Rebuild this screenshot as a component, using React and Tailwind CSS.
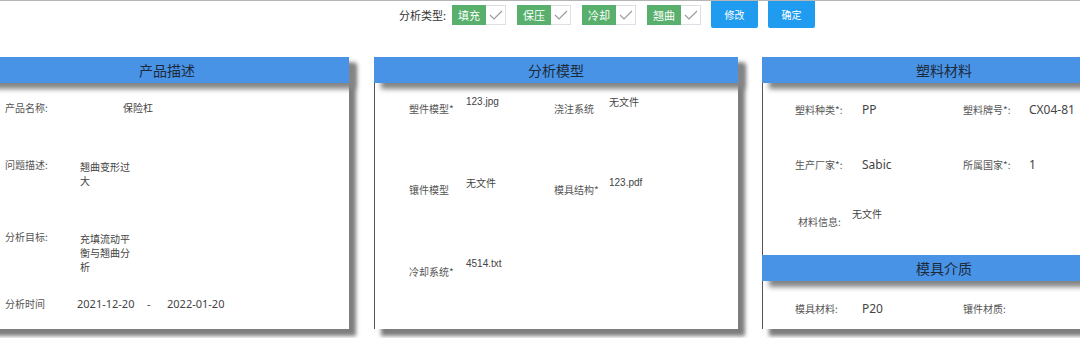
import React from "react";

const CJK = { fontFamily: '"Noto Sans CJK SC", "Noto Sans", sans-serif' };
const LAT = { fontFamily: '"Noto Sans", "Noto Sans CJK SC", sans-serif' };
const ARIAL = { fontFamily: '"Liberation Sans", "Noto Sans CJK SC", sans-serif' };

function Check() {
  return (
    <div className="w-[20px] h-[20px] bg-white border border-l-0 border-[#dcdfe6] flex items-center justify-center">
      <svg width="14" height="10" viewBox="0 0 14 10">
        <path d="M1 5 L5 9 L13 1" fill="none" stroke="#9a9a9a" strokeWidth="1.1" />
      </svg>
    </div>
  );
}

function Tag({ label, className }) {
  return (
    <div className={"flex mt-[4px] " + (className || "")}>
      <div className="w-[34px] h-[20px] bg-[#58b06c] text-white text-[11px] leading-[20px] text-center" style={CJK}>
        {label}
      </div>
      <Check />
    </div>
  );
}

function Btn({ label, className }) {
  return (
    <div
      className={"w-[47px] h-[27px] bg-[#1f9cf0] rounded-b-[2px] text-white text-[10px] leading-[27px] text-center " + (className || "")}
      style={CJK}
    >
      {label}
    </div>
  );
}

function Header({ title, className }) {
  return (
    <div
      className={"relative z-10 shrink-0 h-[26px] bg-[#4893e6] flex items-center justify-center text-[14px] text-[#1d2a3a] shadow-[7px_6px_5px_#858585] " + (className || "")}
      style={CJK}
    >
      {title}
    </div>
  );
}

function Panel({ title, className, children }) {
  return (
    <div className={"relative flex flex-col w-[364px] h-[272px] shrink-0 overflow-visible bg-white border-l border-[#555] shadow-[7px_7px_4px_#7d7d7d] " + (className || "")}>
      <Header title={title} className="-ml-px" />
      {children}
    </div>
  );
}

const L = "text-[10px] leading-[14px] text-[#555] whitespace-nowrap";
const V = "text-[10px] leading-[14px] text-[#444]";

export default function App() {
  return (
    <div className="w-[1080px] h-[338px] overflow-hidden bg-white border-t border-[#b5b5b5]" style={CJK}>
      {/* top bar */}
      <div className="h-[56px] flex items-start">
        <div className="ml-[399px] mt-[7px] text-[11px] leading-[14px] text-[#333] w-[44px] whitespace-nowrap">分析类型:</div>
        <Tag label="填充" className="ml-[9px]" />
        <Tag label="保压" className="ml-[11px]" />
        <Tag label="冷却" className="ml-[11px]" />
        <Tag label="翘曲" className="ml-[11px]" />
        <Btn label="修改" className="ml-[10px]" />
        <Btn label="确定" className="ml-[10px]" />
      </div>

      {/* panels */}
      <div className="flex items-start">
        {/* Panel 1 */}
        <Panel title="产品描述" className="ml-[-15px]">
          <div className="flex flex-col pl-[19px] pt-[18px]">
            <div className="flex h-[57px]">
              <div className={L + " w-[118px]"}>产品名称:</div>
              <div className={V}>保险杠</div>
            </div>
            <div className="flex h-[72px]">
              <div className={L + " w-[75px]"}>问题描述:</div>
              <div className={V + " w-[52px] mt-[2px]"}>翘曲变形过大</div>
            </div>
            <div className="flex h-[67px]">
              <div className={L + " w-[75px]"}>分析目标:</div>
              <div className={V + " w-[52px] mt-[2px]"}>充填流动平衡与翘曲分析</div>
            </div>
            <div className="flex">
              <div className={L + " w-[72px]"}>分析时间</div>
              <div className="text-[11px] leading-[14px] text-[#444] w-[70px]" style={LAT}>2021-12-20</div>
              <div className="text-[11px] leading-[14px] text-[#444] w-[20px]" style={LAT}>-</div>
              <div className="text-[11px] leading-[14px] text-[#444]" style={LAT}>2022-01-20</div>
            </div>
          </div>
        </Panel>

        {/* Panel 2 */}
        <Panel title="分析模型" className="ml-[25px]">
          <div className="grid grid-cols-[57px_88px_55px_1fr] auto-rows-[81px] pl-[34px] pt-[12px]">
            <div className={L + " mt-[7px]"}>塑件模型*</div>
            <div className="text-[10px] leading-[14px] text-[#444]" style={ARIAL}>123.jpg</div>
            <div className={L + " mt-[7px]"}>浇注系统</div>
            <div className={V}>无文件</div>

            <div className={L + " mt-[7px]"}>镶件模型</div>
            <div className={V}>无文件</div>
            <div className={L + " mt-[7px]"}>模具结构*</div>
            <div className="text-[10px] leading-[14px] text-[#444]" style={ARIAL}>123.pdf</div>

            <div className={L + " mt-[8px]"}>冷却系统*</div>
            <div className="text-[10px] leading-[14px] text-[#444]" style={ARIAL}>4514.txt</div>
            <div></div>
            <div></div>
          </div>
        </Panel>

        {/* Panel 3 */}
        <Panel title="塑料材料" className="ml-[24px]">
          <div className="flex flex-col pl-[32px]">
            <div className="flex items-center h-[18px] mt-[18px]">
              <div className={L + " w-[67px]"}>塑料种类*:</div>
              <div className="text-[12px] text-[#444] w-[101px]" style={LAT}>PP</div>
              <div className={L + " w-[66px]"}>塑料牌号*:</div>
              <div className="text-[12px] text-[#444]" style={LAT}>CX04-81</div>
            </div>
            <div className="flex items-center h-[18px] mt-[37px]">
              <div className={L + " w-[67px]"}>生产厂家*:</div>
              <div className="text-[12px] text-[#444] w-[101px]" style={LAT}>Sabic</div>
              <div className={L + " w-[66px]"}>所属国家*:</div>
              <div className="text-[12px] text-[#444]" style={LAT}>1</div>
            </div>
            <div className="flex items-start h-[48px] mt-[33px] pl-[3px]">
              <div className={L + " w-[54px] mt-[8px]"}>材料信息:</div>
              <div className={V}>无文件</div>
            </div>
          </div>
          <Header title="模具介质" className="-ml-px" />
          <div className="flex items-center h-[18px] mt-[19px] pl-[32px]">
            <div className={L + " w-[67px]"}>模具材料:</div>
            <div className="text-[12px] text-[#444] w-[101px]" style={LAT}>P20</div>
            <div className={L + " w-[66px]"}>镶件材质:</div>
          </div>
        </Panel>
      </div>
    </div>
  );
}
